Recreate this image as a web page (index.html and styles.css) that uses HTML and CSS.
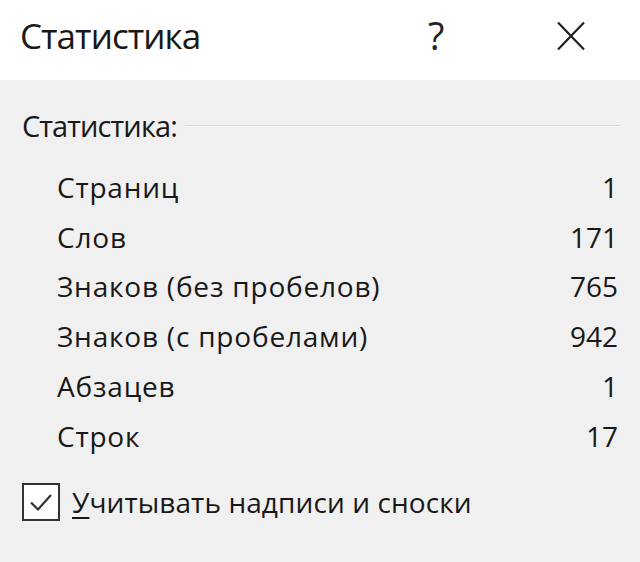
FILE: index.html
```html
<!DOCTYPE html>
<html lang="ru">
<head>
<meta charset="utf-8">
<link rel="stylesheet" href="styles.css">
</head>
<body>
<div class="dialog">
  <div class="titlebar">
    <div class="title">Статистика</div>
    <div class="help">?</div>
    <div class="close">
      <svg width="28" height="30" viewBox="0 0 28 30"><path d="M1 1.5 L27 28.5 M27 1.5 L1 28.5" stroke="#222" stroke-width="2.2" fill="none"/></svg>
    </div>
  </div>
  <div class="body">
    <div class="group-head">
      <span class="group-label">Статистика:</span>
      <span class="group-line"></span>
    </div>
    <div class="rows">
      <div class="row"><span>Страниц</span><span>1</span></div>
      <div class="row"><span>Слов</span><span>171</span></div>
      <div class="row"><span>Знаков (без пробелов)</span><span>765</span></div>
      <div class="row"><span>Знаков (с пробелами)</span><span>942</span></div>
      <div class="row"><span>Абзацев</span><span>1</span></div>
      <div class="row"><span>Строк</span><span>17</span></div>
    </div>
    <div class="check">
      <span class="box">
        <svg width="30" height="30" viewBox="0 0 30 30"><path d="M5 15.5 L12 22.5 L25 8" stroke="#333" stroke-width="2.2" fill="none"/></svg>
      </span>
      <span class="check-label"><u>У</u>читывать надписи и сноски</span>
    </div>
  </div>
</div>
</body>
</html>
```
FILE: styles.css
```css
html, body { margin: 0; padding: 0; }
body {
  width: 640px; height: 562px; overflow: hidden;
  background: #f0f0f0;
  font-family: "Open Sans", "Noto Sans", sans-serif;
  color: #181818;
}
.dialog { display: flex; flex-direction: column; height: 562px; }
.titlebar {
  height: 80px; background: #ffffff;
  display: flex; align-items: center;
  padding-left: 20px; padding-bottom: 10px; box-sizing: border-box;
}
.title { font-size: 35px; flex: 1; letter-spacing: -0.95px; margin-left: 0; }
.help { font-size: 38px; width: 20px; margin-right: 109px; color: #222; }
.close { width: 28px; height: 30px; margin-right: 55px; margin-top: 2px; }
.body { padding: 0 20px 0 20px; flex: 1; }
.group-head { display: flex; align-items: center; margin-top: 30px; height: 30px; }
.group-label { font-size: 29px; letter-spacing: -0.9px; margin-left: 2px; }
.group-line { flex: 1; border-top: 1px solid #d6d6d6; border-bottom: 1px solid #fafafa; margin-left: 8px; margin-top: 2px; }
.rows { margin-top: 22px; padding-left: 37px; padding-right: 2px; }
.row { display: flex; justify-content: space-between; height: 49.8px; align-items: center; font-size: 28px; }
.row span:first-child { letter-spacing: 0.8px; }
.check { display: flex; align-items: center; margin-top: 22px; }
.box {
  width: 38px; height: 38px; border: 2.5px solid #333; box-sizing: border-box;
  background: #fff; display: flex; align-items: center; justify-content: center;
  margin-left: 2px;
}
.check-label { font-size: 28px; margin-left: 12px; letter-spacing: 0.1px; }
.check-label u { text-underline-offset: 4px; text-decoration-thickness: 2px; }
```
